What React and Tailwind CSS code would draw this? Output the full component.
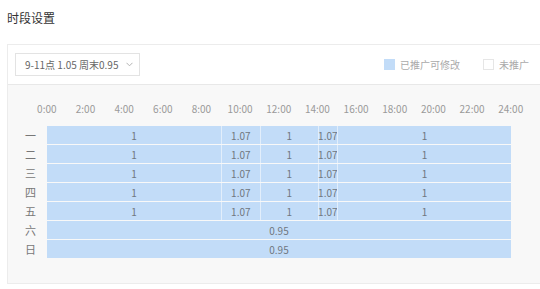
const days = ['一', '二', '三', '四', '五', '六', '日']
const times = ['0:00', '2:00', '4:00', '6:00', '8:00', '10:00', '12:00', '14:00', '16:00', '18:00', '20:00', '22:00', '24:00']

const weekday = [
  { hours: 9, value: '1' },
  { hours: 2, value: '1.07' },
  { hours: 3, value: '1' },
  { hours: 1, value: '1.07' },
  { hours: 9, value: '1' },
]
const weekend = [{ hours: 24, value: '0.95' }]

const font = { fontFamily: '"Noto Sans CJK SC", "Noto Sans", sans-serif' }

function Row({ label, segments }) {
  return (
    <div className="flex h-[19px]">
      <div className="w-[39px] flex items-center justify-center text-[11px] text-[#777] pl-[6px]">{label}</div>
      <div className="w-[464px] h-[18px] flex bg-[#c2dcf8]">
        {segments.map((s, i) => (
          <div
            key={i}
            className={`flex items-center justify-center text-[10px] text-[#707780] ${i > 0 ? 'border-l border-[#e2eefb]' : ''}`}
            style={{ width: `${(s.hours / 24) * 100}%` }}
          >
            {s.value}
          </div>
        ))}
      </div>
    </div>
  )
}

export default function App() {
  return (
    <div className="w-[540px] h-[289px] bg-white overflow-hidden" style={font}>
      {/* title */}
      <div className="h-[36px] flex items-center pl-[7px] text-[12px] text-[#333] mb-[8px]">时段设置</div>

      <div className="ml-[7px] w-[540px] border border-[#ececec]">
        {/* toolbar */}
        <div className="h-[40px] flex items-center justify-between pl-[7px] pr-[17px] border-b border-[#e8e8e8]">
          <div className="h-[23px] w-[125px] border border-[#e3e3e3] flex items-center pl-[9px] text-[10px] text-[#666] whitespace-nowrap">
            <span>9-11点 1.05 周末0.95</span>
            <svg className="ml-[8px]" width="7" height="5" viewBox="0 0 7 5" fill="none">
              <path d="M0.5 0.8 L3.5 3.8 L6.5 0.8" stroke="#aaa" strokeWidth="0.9" />
            </svg>
          </div>
          <div className="flex items-center text-[10px] text-[#aaa] whitespace-nowrap">
            <span className="w-[11px] h-[11px] bg-[#c2dcf8] mr-[5px]" />
            <span>已推广可修改</span>
            <span className="w-[11px] h-[11px] border border-[#e6e6e6] bg-white ml-[23px] mr-[5px]" />
            <span>未推广</span>
          </div>
        </div>

        {/* schedule */}
        <div className="bg-[#f8f8f8] h-[198px] pt-[16px]">
          <div className="flex h-[16px] mb-[9px] ml-[19.5px]">
            {times.map((t) => (
              <div key={t} className="w-[38.667px] shrink-0 text-center text-[10px] text-[#9a9a9a] leading-[16px]">{t}</div>
            ))}
          </div>
          {days.map((d, i) => (
            <Row key={d} label={d} segments={i < 5 ? weekday : weekend} />
          ))}
        </div>
      </div>
    </div>
  )
}
